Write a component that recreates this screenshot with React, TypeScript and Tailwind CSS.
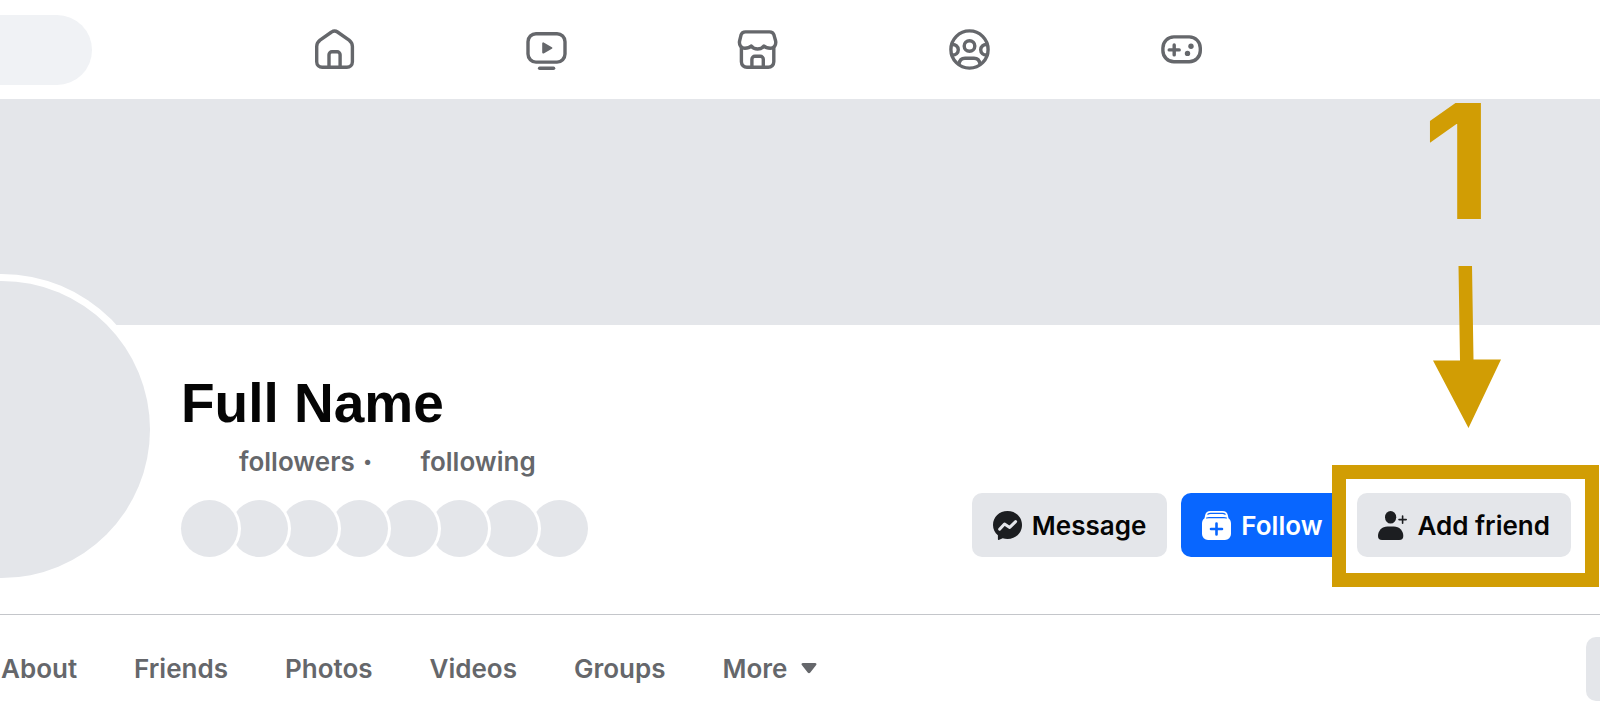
import type { ReactNode } from "react";

interface NavIconProps {
  label: string;
  children: ReactNode;
}

const NavIcon = ({ label, children }: NavIconProps) => (
  <a
    href="#"
    aria-label={label}
    className="flex h-full flex-1 items-center justify-center text-[#65676b]"
  >
    <svg
      viewBox="0 0 41 41"
      className="h-[41px] w-[41px]"
      fill="none"
      stroke="currentColor"
      strokeWidth="3.4"
      strokeLinecap="round"
      strokeLinejoin="round"
    >
      {children}
    </svg>
  </a>
);

const TopBar = () => (
  <header className="flex h-[99px] items-center bg-white">
    <input
      type="search"
      aria-label="Search"
      className="h-[70px] w-[92px] shrink-0 rounded-r-full bg-[#f0f2f5] px-4 outline-none"
    />
    <nav className="ml-[137px] flex h-full w-[1058px]">
      <NavIcon label="Home">
        <path d="M17.6 3 6 11.2Q2.7 13.8 2.7 17.6V32.8a5.5 5.5 0 0 0 5.5 5.5h24.700a5.500 5.500 0 0 0 5.500-5.500V17.6Q38.400 13.800 35.100 11.200L23.500 3a5 5 0 0 0-5.900 0Z" />
        <path d="M15 38V25.800a3 3 0 0 1 3-3h5.100a3 3 0 0 1 3 3V38" />
      </NavIcon>
      <NavIcon label="Video">
        <rect x="2" y="4.7" width="37" height="28.4" rx="8" />
        <path
          d="M17.2 14.4v9.2l8.200-4.600Z"
          fill="currentColor"
          strokeWidth="2"
        />
        <path d="M13.6 39.2h14" />
      </NavIcon>
      <NavIcon label="Marketplace">
        <path d="M8.500 2.900h24c2.500 0 3.800 1 4.500 3.200L38.500 11.500c1.100 4.300-1.400 7.700-5.200 7.700-2.600 0-4.700-.5-6.400-2.200-1.400 2-3.400 3-6.300 3s-4.900-1-6.300-3c-1.700 1.700-3.800 2.200-6.400 2.200-3.800 0-6.300-3.400-5.200-7.700L4 6.100c.7-2.200 2-3.200 4.500-3.200Z" />
        <path d="M4.400 18.500V32.800a5.500 5.500 0 0 0 5.500 5.500h21.400a5.500 5.500 0 0 0 5.500-5.500V18.500" />
        <path d="M14.900 38v-7.700a3 3 0 0 1 3-3h5.400a3 3 0 0 1 3 3V38" />
      </NavIcon>
      <NavIcon label="Groups">
        <circle cx="20.5" cy="20.5" r="18.6" />
        <circle cx="20.5" cy="17" r="5.3" />
        <path d="M3 15.600c3.700-.3 6.300 1.800 6.300 5.200s-2.600 5.500-6.300 5.200M38 15.600c-3.700-.3-6.300 1.800-6.300 5.200s2.600 5.500 6.300 5.200" />
        <path d="M10 35c.5-3.700 2.700-5.700 6-5.700h9c3.300 0 5.500 2 6 5.700" />
      </NavIcon>
      <NavIcon label="Gaming">
        <rect x="1.9" y="7.900" width="37.400" height="24.800" rx="11" />
        <path d="M13.2 15.900v10M8.200 20.900h10" />
        <g fill="currentColor" stroke="none">
          <circle cx="30" cy="17.2" r="2.7" />
          <circle cx="26.5" cy="24.4" r="2.7" />
        </g>
      </NavIcon>
    </nav>
  </header>
);

const MessengerIcon = () => (
  <svg viewBox="0 0 29 29" className="h-[29px] w-[29px]" fill="#1c1e21">
    <path d="M14.500 0C6.300 0 0 6 0 13.900c0 4.200 1.800 7.800 4.900 10.300v3.700c0 .8.700 1.200 1.400.9l3.400-1.500c1.500.4 3.100.6 4.800.6C22.700 27.900 29 21.900 29 13.900S22.700 0 14.500 0Z" />
    <path
      d="m6.600 18.200 4.900-5.200 5.200 3.400 5.900-5.800"
      fill="none"
      stroke="#e4e6ea"
      strokeWidth="3"
      strokeLinecap="round"
      strokeLinejoin="round"
    />
  </svg>
);

const FollowIcon = () => (
  <svg viewBox="0 0 29 29" className="h-[29px] w-[29px]">
    <path
      fill="white"
      d="M8.500 0h12c3 0 4.700 1.500 5.300 4l.7 3.300C28.200 8.700 29 10.400 29 12.500V23a6 6 0 0 1-6 6H6a6 6 0 0 1-6-6V12.500c0-2.100.8-3.800 2.500-5.200L3.200 4c.6-2.500 2.300-4 5.300-4Z"
    />
    <path
      d="M5.800 3.200c.8-.6 1.700-.8 2.800-.8h11.800c1.100 0 2 .2 2.800.8M4.600 7c.8-.3 1.500-.4 2.400-.4h15c.9 0 1.600.1 2.400.4"
      fill="none"
      stroke="#0866ff"
      strokeWidth="1.2"
      strokeLinecap="round"
    />
    <path
      d="M14.500 12.500v11M9 18h11"
      stroke="#0866ff"
      strokeWidth="2.6"
      strokeLinecap="round"
    />
  </svg>
);

const AddFriendIcon = () => (
  <svg viewBox="0 0 29 29" className="h-[29px] w-[29px]" fill="#1c1e21">
    <ellipse cx="12.6" cy="6.3" rx="5.6" ry="6.3" />
    <path d="M9.500 15.500h6.300c5.500 0 9.500 4.200 9.500 9.500 0 2.700-1.300 4-4 4H4c-2.700 0-4-1.300-4-4 0-5.300 4-9.500 9.500-9.500Z" />
    <path
      d="M24.600 5v7.200M21 8.600h7.200"
      stroke="#1c1e21"
      strokeWidth="1.6"
      strokeLinecap="round"
    />
  </svg>
);

const buttonClass =
  "flex h-16 items-center gap-[10px] whitespace-nowrap rounded-[10px] px-[21px] text-[26px] font-semibold";

/* Numbered pointer and frame around the highlighted button */
const StepMarker = () => (
  <div className="pointer-events-none">
    <div className="absolute -top-7 -right-7 -bottom-[30px] -left-[25px] border-[14px] border-[#d19d04] bg-white" />
    <div className="absolute right-[70px] bottom-[129px] flex w-[68px] flex-col items-center text-[#d19d04]">
      <span className="pr-5 text-[159px] leading-[160px] font-bold">1</span>
      <svg
        viewBox="0 0 68 162"
        className="mt-[25px] h-[162px] w-[68px]"
        fill="currentColor"
      >
        <path d="M25.500 0h13.500l1.500 93.500H68L35.500 162 0 94.500h27Z" />
      </svg>
    </div>
  </div>
);

const friends = [1, 2, 3, 4, 5, 6, 7, 8];

const ProfileHeader = () => (
  <section className="flex items-end border-b border-[#c4c6ca] pb-9">
    <div className="-mt-11 -ml-[147px] h-[297px] w-[297px] shrink-0 rounded-full bg-[#e4e6ea] ring-[7px] ring-white" />
    <div className="mb-[21px] ml-[31px] flex flex-col">
      <h1 className="font-['Liberation_Sans',Arial,sans-serif] text-[55px] leading-[64px] font-bold text-[#050505]">
        Full Name
      </h1>
      <div className="mt-[11px] flex pl-[58px] text-[26px] leading-8 font-semibold text-[#65676b]">
        <a href="#">followers</a>
        <span className="ml-2 font-black">·</span>
        <a href="#" className="ml-12">
          following
        </a>
      </div>
      {/* reversed so that each avatar overlaps the one to its right */}
      <div className="mt-[22px] flex flex-row-reverse justify-end">
        {friends.map((friend) => (
          <div
            key={friend}
            className="relative -mr-[7px] h-[57px] w-[57px] rounded-full bg-[#e4e6ea] ring-[3px] ring-white"
          />
        ))}
      </div>
    </div>
    <div className="mr-[29px] mb-[21px] ml-auto flex gap-[14px]">
      <button className={`${buttonClass} bg-[#e4e6ea] text-[#050505]`}>
        <MessengerIcon />
        Message
      </button>
      <button className={`${buttonClass} bg-[#0866ff] text-white`}>
        <FollowIcon />
        Follow
      </button>
      <div className="relative">
        <StepMarker />
        <button
          className={`${buttonClass} relative bg-[#e4e6ea] text-[#050505]`}
        >
          <AddFriendIcon />
          Add friend
        </button>
      </div>
    </div>
  </section>
);

const tabs = ["About", "Friends", "Photos", "Videos", "Groups"];

const ProfileTabs = () => (
  <div className="flex h-[107px] items-center">
    <nav className="flex gap-[57px] pl-px text-[26px] font-semibold text-[#65676b]">
      {tabs.map((tab) => (
        <a key={tab} href="#">
          {tab}
        </a>
      ))}
      <button className="flex items-center gap-[14px]">
        More
        <svg viewBox="0 0 16 11" className="h-[11px] w-4" fill="currentColor">
          <path d="M2 0h12c1.500 0 2 1.200 1 2.300L9.300 9.600c-.8.900-1.800.9-2.600 0L1 2.300C0 1.200.5 0 2 0Z" />
        </svg>
      </button>
    </nav>
    <button
      aria-label="More options"
      className="ml-auto h-16 w-[14px] rounded-l-[10px] bg-[#e4e6ea]"
    />
  </div>
);

export default function App() {
  return (
    <div className="overflow-hidden bg-white font-['Inter','Liberation_Sans',sans-serif]">
      <TopBar />
      <div className="h-[226px] bg-[#e4e6ea]" />
      <ProfileHeader />
      <ProfileTabs />
    </div>
  );
}
